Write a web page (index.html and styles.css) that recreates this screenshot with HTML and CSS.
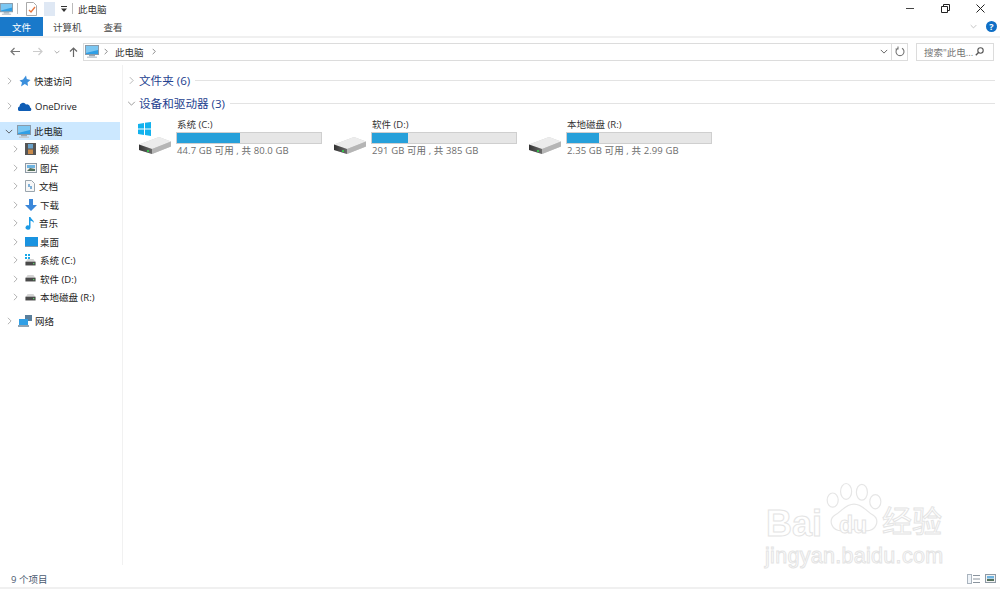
FILE: index.html
```html
<!DOCTYPE html>
<html lang="zh-CN">
<head>
    <meta charset="UTF-8">
    <title>此电脑</title>
    <link rel="stylesheet" href="styles.css">
</head>
<body>
    <svg class="defs" width="0" height="0">
        <defs>
            <linearGradient id="drive-front" x1="0" y1="0" x2="1" y2="0">
                <stop offset="0" stop-color="#333"/>
                <stop offset="1" stop-color="#6a6a6a"/>
            </linearGradient>
            <symbol id="pc" viewBox="0 0 14 13">
                <rect x="0.5" y="0.5" width="13" height="9" fill="#2f9fe6" stroke="#8a9aa8"/>
                <path d="M1 1h12v4L1 8z" fill="#7cc7f2"/>
                <rect x="4" y="10" width="6" height="1.5" fill="#9aa7b2"/>
                <rect x="2" y="11.5" width="10" height="1.5" fill="#c3ccd3"/>
            </symbol>
            <symbol id="drive" viewBox="0 0 34 20">
                <path d="M1 9.500L21 2l12 4.500v5L14 19 1 15z" fill="#cfcfcf"/>
                <path d="M1 9.500l13 4.500 19-7.500L21 2z" fill="#ececec"/>
                <path d="M1 9.500l13 4.500v5L1 15z" fill="url(#drive-front)"/>
                <path d="M14 14l19-7.500v5L14 19z" fill="#b5b5b5"/>
                <rect x="9" y="15" width="2" height="2" fill="#37c04a"/>
            </symbol>
            <symbol id="small-drive" viewBox="0 0 13 8">
                <path d="M1 3l2-3h7l2 3z" fill="#d4d4d4"/>
                <rect x="0.5" y="3" width="12" height="4.500" fill="#4a4a4a"/>
                <rect x="9.500" y="4.500" width="1.500" height="1.500" fill="#5fd06a"/>
            </symbol>
            <symbol id="closed" viewBox="0 0 6 10">
                <path d="M1 1l4 4-4 4" fill="none" stroke="currentColor" stroke-width="1"/>
            </symbol>
            <symbol id="open" viewBox="0 0 10 6">
                <path d="M1 1l4 4 4-4" fill="none" stroke="currentColor" stroke-width="1"/>
            </symbol>
        </defs>
    </svg>

    <div class="window">
        <div class="title-bar">
            <svg class="qa-pc" width="13" height="12"><use href="#pc"/></svg>
            <span class="qa-sep"></span>
            <svg class="qa-doc" width="11" height="14" viewBox="0 0 11 14">
                <path d="M.5.500h7l3 3v10H.500z" fill="#fff" stroke="#a9a9a9"/>
                <path d="M3 8l2 2 4-5" fill="none" stroke="#e8743b" stroke-width="1.300"/>
            </svg>
            <svg class="qa-blank" width="11" height="14" viewBox="0 0 11 14">
                <rect width="11" height="14" fill="#dfe8f4"/>
            </svg>
            <svg class="qa-arrow" width="6" height="7" viewBox="0 0 6 7">
                <path d="M0 1h6v1H0zM0 3.500h6L3 7z" fill="#333"/>
            </svg>
            <span class="qa-sep qa-sep-last"></span>
            <span class="title-text">此电脑</span>
            <div class="window-buttons">
                <svg width="9" height="9" viewBox="0 0 9 9"><path d="M0 4.500h8" stroke="#444"/></svg>
                <svg width="9" height="9" viewBox="0 0 9 9"><path d="M.5 2.500h6v6h-6zM2.500 2.500v-2h6v6h-2" fill="none" stroke="#222"/></svg>
                <svg width="9" height="9" viewBox="0 0 9 9"><path d="M.5.500l8 8M8.500.500l-8 8" stroke="#222"/></svg>
            </div>
        </div>

        <div class="ribbon">
            <span class="tab tab-file">文件</span>
            <span class="tab tab-computer">计算机</span>
            <span class="tab tab-view">查看</span>
            <svg class="ribbon-chevron" width="7" height="5"><use href="#open"/></svg>
            <span class="help">?</span>
        </div>

        <div class="nav-bar">
            <svg class="nav-back" width="10" height="9" viewBox="0 0 10 9"><path d="M10 4.500H1M4.500 1L1 4.500 4.500 8" fill="none" stroke="#777" stroke-width="1.200"/></svg>
            <svg class="nav-forward" width="10" height="9" viewBox="0 0 10 9"><path d="M0 4.500h9M5.500 1L9 4.500 5.500 8" fill="none" stroke="#ccc" stroke-width="1.200"/></svg>
            <svg class="nav-recent" width="6" height="4"><use href="#open"/></svg>
            <svg class="nav-up" width="9" height="10" viewBox="0 0 9 10"><path d="M4.500 10V1M1 4.500L4.500 1 8 4.500" fill="none" stroke="#666" stroke-width="1.200"/></svg>
            <div class="address">
                <svg class="address-pc" width="14" height="13"><use href="#pc"/></svg>
                <svg class="crumb-arrow" width="4" height="7"><use href="#closed"/></svg>
                <span class="crumb">此电脑</span>
                <svg class="crumb-arrow" width="4" height="7"><use href="#closed"/></svg>
                <svg class="address-drop" width="8" height="5"><use href="#open"/></svg>
                <span class="refresh">
                    <svg width="10" height="11" viewBox="0 0 10 11"><path d="M3 2.200a4 4 0 1 0 4 0M3 .500v2.500H.500" fill="none" stroke="#777" stroke-width="1.100"/></svg>
                </span>
            </div>
            <div class="search">
                <span>搜索"此电...</span>
                <svg width="9" height="9" viewBox="0 0 9 9"><circle cx="5.500" cy="3.500" r="2.700" fill="none" stroke="#555" stroke-width="1.100"/><path d="M3.500 5.500L.8 8.200" stroke="#555" stroke-width="1.300"/></svg>
            </div>
        </div>

        <div class="main">
            <nav class="sidebar">
                <div class="tree-row top-row">
                    <svg class="tree-arrow" width="5" height="8"><use href="#closed"/></svg>
                    <svg class="tree-icon" width="13" height="12" viewBox="0 0 13 12"><path d="M8 .5l.8 3.500L12.500 5 9.500 7.500 10 11 6.800 9 3 11.500 4 7.500 1.500 5.500 5 4.500z" fill="#3b8fdc"/></svg>
                    <span>快速访问</span>
                </div>
                <div class="tree-row top-row">
                    <svg class="tree-arrow" width="5" height="8"><use href="#closed"/></svg>
                    <svg class="tree-icon" width="14" height="9" viewBox="0 0 14 9"><path d="M1 9a2.500 2.500 0 0 1 .5-4.500A3.500 3.500 0 0 1 8 2.500a3 3 0 0 1 4 3A2 2 0 0 1 12.500 9z" fill="#0f5db5"/></svg>
                    <span>OneDrive</span>
                </div>
                <div class="tree-row top-row selected">
                    <svg class="tree-arrow tree-arrow-open" width="8" height="5"><use href="#open"/></svg>
                    <svg class="tree-icon" width="14" height="13"><use href="#pc"/></svg>
                    <span>此电脑</span>
                </div>
                <div class="tree-row child-row">
                    <svg class="tree-arrow" width="5" height="8"><use href="#closed"/></svg>
                    <svg class="child-icon" width="11" height="12" viewBox="0 0 11 12"><rect width="11" height="12" fill="#555"/><rect x="3" y="1" width="5" height="4.500" fill="#6aa2c9"/><rect x="3" y="6.500" width="5" height="4.500" fill="#c98a4b"/></svg>
                    <span>视频</span>
                </div>
                <div class="tree-row child-row">
                    <svg class="tree-arrow" width="5" height="8"><use href="#closed"/></svg>
                    <svg class="child-icon" width="12" height="10" viewBox="0 0 12 10"><rect x=".5" y=".5" width="11" height="9" fill="#f2f2f2" stroke="#8e9aa5"/><rect x="2" y="2" width="8" height="3" fill="#6eb3e0"/><path d="M2 8l3-3 5 1v2z" fill="#54705a"/></svg>
                    <span>图片</span>
                </div>
                <div class="tree-row child-row">
                    <svg class="tree-arrow" width="5" height="8"><use href="#closed"/></svg>
                    <svg class="child-icon" width="10" height="12" viewBox="0 0 10 12"><path d="M.5.500h6l3 3v8H.500z" fill="#f7f7f7" stroke="#9aa5ad"/><path d="M3 4h2v3H3zM5 6h2v3H5z" fill="#7fb0d8"/></svg>
                    <span>文档</span>
                </div>
                <div class="tree-row child-row">
                    <svg class="tree-arrow" width="5" height="8"><use href="#closed"/></svg>
                    <svg class="child-icon" width="12" height="12" viewBox="0 0 12 12"><path d="M4 0h4v6h4l-6 6-6-6h4z" fill="#3b87d9"/></svg>
                    <span>下载</span>
                </div>
                <div class="tree-row child-row">
                    <svg class="tree-arrow" width="5" height="8"><use href="#closed"/></svg>
                    <svg class="child-icon" width="10" height="13" viewBox="0 0 10 13"><path d="M4 0h1.500c.3 2 3.500 3 3.500 6-1-1.500-2-2-3.500-2.300V10.500A2.500 2.200 0 1 1 4 8.500z" fill="#1c9be6"/></svg>
                    <span>音乐</span>
                </div>
                <div class="tree-row child-row">
                    <svg class="tree-arrow" width="5" height="8"><use href="#closed"/></svg>
                    <svg class="child-icon desktop-icon" width="13" height="10" viewBox="0 0 13 10"><rect width="13" height="9" fill="#1a93e0"/><rect y="9" width="13" height="1" fill="#8a9aa8"/></svg>
                    <span>桌面</span>
                </div>
                <div class="tree-row child-row">
                    <svg class="tree-arrow" width="5" height="8"><use href="#closed"/></svg>
                    <span class="child-icon small-system">
                        <svg class="small-win" width="5" height="5" viewBox="0 0 5 5"><path d="M0 0h2v2H0zM3 0h2v2H3zM0 3h2v2H0zM3 3h2v2H3z" fill="#19a8e8"/></svg>
                        <svg width="11" height="7"><use href="#small-drive"/></svg>
                    </span>
                    <span>系统 (C:)</span>
                </div>
                <div class="tree-row child-row">
                    <svg class="tree-arrow" width="5" height="8"><use href="#closed"/></svg>
                    <svg class="child-icon" width="11" height="7"><use href="#small-drive"/></svg>
                    <span>软件 (D:)</span>
                </div>
                <div class="tree-row child-row">
                    <svg class="tree-arrow" width="5" height="8"><use href="#closed"/></svg>
                    <svg class="child-icon" width="11" height="7"><use href="#small-drive"/></svg>
                    <span>本地磁盘 (R:)</span>
                </div>
                <div class="tree-row top-row network-row">
                    <svg class="tree-arrow" width="5" height="8"><use href="#closed"/></svg>
                    <svg class="tree-icon" width="14" height="12" viewBox="0 0 14 12"><rect x="7" y="0" width="7" height="6" fill="#5a7f9c"/><rect x="1" y="4" width="9" height="6" fill="#2f9fe6"/><rect x="0" y="10" width="11" height="2" fill="#8fa3b3"/></svg>
                    <span>网络</span>
                </div>
            </nav>

            <section class="content">
                <div class="group-head">
                    <svg class="group-arrow" width="5" height="9"><use href="#closed"/></svg>
                    <span>文件夹 (6)</span>
                    <i class="group-line"></i>
                </div>
                <div class="group-head group-open">
                    <svg class="group-arrow-open" width="9" height="5"><use href="#open"/></svg>
                    <span>设备和驱动器 (3)</span>
                    <i class="group-line"></i>
                </div>
                <div class="drives">
                    <div class="drive">
                        <div class="drive-icon">
                            <svg class="win-logo" width="13" height="14" viewBox="0 0 13 14"><path d="M0 2l6-1v5.500H0zM7 .8L13 0v6.500H7zM0 7.500h6V13l-6-1zM7 7.500h6V14l-6-1z" fill="#12b2ee"/></svg>
                            <svg width="34" height="20"><use href="#drive"/></svg>
                        </div>
                        <div class="drive-info">
                            <div class="drive-name">系统 (C:)</div>
                            <div class="drive-bar"><div class="drive-used" style="width: 43.500%"></div></div>
                            <div class="drive-free">44.7 GB 可用 , 共 80.0 GB</div>
                        </div>
                    </div>
                    <div class="drive">
                        <div class="drive-icon">
                            <svg width="34" height="20"><use href="#drive"/></svg>
                        </div>
                        <div class="drive-info">
                            <div class="drive-name">软件 (D:)</div>
                            <div class="drive-bar"><div class="drive-used" style="width: 25%"></div></div>
                            <div class="drive-free">291 GB 可用 , 共 385 GB</div>
                        </div>
                    </div>
                    <div class="drive">
                        <div class="drive-icon">
                            <svg width="34" height="20"><use href="#drive"/></svg>
                        </div>
                        <div class="drive-info">
                            <div class="drive-name">本地磁盘 (R:)</div>
                            <div class="drive-bar"><div class="drive-used" style="width: 22%"></div></div>
                            <div class="drive-free">2.35 GB 可用 , 共 2.99 GB</div>
                        </div>
                    </div>
                </div>
            </section>
        </div>

        <div class="status-bar">
            <span>9 个项目</span>
            <div class="view-buttons">
                <svg width="13" height="10" viewBox="0 0 13 10"><rect x=".5" y=".5" width="4" height="9" fill="#eef3f8" stroke="#aab4be"/><path d="M6 1.500h7M6 5h7M6 8.500h7" stroke="#8a949e"/></svg>
                <svg width="11" height="9" viewBox="0 0 11 9"><rect x=".5" y=".5" width="10" height="8" fill="#f2f2f2" stroke="#8e9aa5"/><rect x="2" y="2" width="7" height="2.500" fill="#6eb3e0"/><rect x="2" y="5" width="7" height="2" fill="#54705a"/></svg>
            </div>
        </div>

        <div class="watermark">
            <svg class="paw" width="60" height="54" viewBox="0 0 76 62">
                <g fill="#fff" stroke="#e6e6e6" stroke-width="1.500">
                    <ellipse cx="11" cy="21" rx="7" ry="9"/>
                    <ellipse cx="28" cy="10" rx="7" ry="10"/>
                    <ellipse cx="48" cy="11" rx="7" ry="10"/>
                    <ellipse cx="65" cy="23" rx="7" ry="9"/>
                    <path d="M38 26c11 0 15 9 24 14 9 6 5 20-9 20-5 0-10-2-15-2s-10 2-15 2c-14 0-18-14-9-20 9-5 13-14 24-14z"/>
                </g>
            </svg>
            <span class="wm-bai">Bai</span>
            <span class="wm-du">du</span>
            <span class="wm-cn">经验</span>
            <span class="wm-url">jingyan.baidu.com</span>
        </div>
    </div>
</body>
</html>
```

FILE: styles.css
```css
* {
    box-sizing: border-box;
}
body {
    margin: 0;
    background-color: #fff;
    font-family: "Open Sans", "Noto Sans CJK SC", sans-serif;
    font-size: 9.5px;
    color: #333;
}
.defs {
    position: absolute;
}
svg {
    display: block;
    flex: none;
}
.window {
    position: relative;
    display: flex;
    flex-direction: column;
    width: 1000px;
    height: 589px;
    overflow: hidden;
}

/* title */
.title-bar {
    display: flex;
    align-items: center;
    height: 17px;
    flex: none;
}
.qa-sep {
    width: 1px;
    height: 11px;
    margin-left: 4px;
    background-color: #bbb;
}
.qa-doc {
    margin-left: 8px;
}
.qa-blank {
    margin-left: 7px;
}
.qa-arrow {
    margin-left: 6px;
}
.qa-sep-last {
    margin-left: 5px;
}
.title-text {
    margin-left: 5px;
}
.window-buttons {
    display: flex;
    gap: 26px;
    margin-left: auto;
    margin-right: 15px;
}

/* ribbon */
.ribbon {
    display: flex;
    align-items: center;
    height: 21px;
    flex: none;
    border-bottom: 2px solid #f0f0f0;
    color: #444;
}
.tab-file {
    display: flex;
    align-items: center;
    justify-content: center;
    width: 43px;
    height: 19px;
    background-color: #1979ca;
    color: #fff;
}
.tab-computer {
    margin-left: 10px;
}
.tab-view {
    margin-left: 22px;
}
.ribbon-chevron {
    margin-left: auto;
    color: #aaa;
}
.help {
    display: flex;
    align-items: center;
    justify-content: center;
    width: 11px;
    height: 11px;
    margin-left: 9px;
    margin-right: 3px;
    border-radius: 50%;
    background-color: #0f6fc6;
    color: #fff;
    font-size: 9px;
    font-weight: 700;
}

/* address */
.nav-bar {
    display: flex;
    align-items: center;
    height: 27px;
    flex: none;
    padding-left: 10px;
}
.nav-forward {
    margin-left: 13px;
}
.nav-recent {
    margin-left: 11px;
    color: #777;
}
.nav-up {
    margin-left: 9px;
}
.address {
    display: flex;
    align-items: center;
    width: 825px;
    height: 18px;
    margin-left: 5px;
    padding-left: 1px;
    border: 1px solid #dcdcdc;
}
.crumb-arrow {
    margin-left: 5px;
    color: #555;
}
.crumb {
    margin-left: 7px;
}
.crumb + .crumb-arrow {
    margin-left: 8px;
}
.address-drop {
    margin-left: auto;
    margin-right: 3px;
    color: #444;
}
.refresh {
    display: flex;
    align-items: center;
    justify-content: center;
    width: 16px;
    height: 100%;
    border-left: 1px solid #dcdcdc;
}
.search {
    display: flex;
    align-items: center;
    justify-content: space-between;
    width: 78px;
    height: 18px;
    margin-left: 8px;
    padding: 0 9px 0 7px;
    border: 1px solid #dcdcdc;
    color: #777;
}

/* tree */
.main {
    display: flex;
    flex: 1;
    min-height: 0;
}
.sidebar {
    width: 123px;
    flex: none;
    padding-top: 7px;
    border-right: 1px solid #f1f1f1;
}
.tree-row {
    display: flex;
    align-items: center;
    width: 120px;
    height: 18.500px;
    color: #222;
}
.top-row {
    margin-bottom: 6.500px;
}
.top-row .tree-arrow {
    margin-left: 7px;
    color: #a0a0a0;
}
.top-row .tree-icon {
    margin-left: 6px;
    margin-right: 3px;
}
.top-row.selected {
    height: 18px;
    margin-bottom: 0;
    background-color: #cce8ff;
}
.top-row .tree-arrow-open {
    margin-left: 5px;
    color: #444;
}
.top-row.selected .tree-icon {
    margin-left: 4px;
    margin-right: 3px;
}
.child-row .tree-arrow {
    margin-left: 13px;
    color: #a0a0a0;
}
.child-row .child-icon {
    margin-left: 7px;
    margin-right: 3px;
}
.child-row:has(+ .network-row) {
    margin-bottom: 5.500px;
}
.child-row svg.child-icon[width="10"],
.child-row svg.child-icon[width="11"] {
    margin-right: 4px;
}
.child-row .desktop-icon {
    margin-right: 2px;
}
.child-row .small-system {
    display: block;
    width: 11px;
    height: 12px;
    margin-right: 4px;
}
.network-row {
    margin-bottom: 0;
}

/* content */
.content {
    flex: 1;
    min-width: 0;
    padding-top: 6px;
}
.group-head {
    display: flex;
    align-items: center;
    height: 18px;
    margin-bottom: 5px;
    padding-left: 6px;
    font-size: 11.600px;
    color: #24418f;
}
.group-arrow {
    color: #aaa;
    margin-right: 5px;
}
.group-open {
    padding-left: 4px;
    margin-bottom: 6px;
}
.group-arrow-open {
    color: #888;
    margin-right: 3px;
}
.group-line {
    flex: 1;
    height: 1px;
    margin-left: 5px;
    margin-right: 5px;
    background-color: #e3e3e3;
}
.drives {
    display: flex;
    padding-left: 15px;
}
.drive {
    display: flex;
    width: 195px;
}
.drive-icon {
    display: flex;
    flex-direction: column;
    justify-content: flex-end;
    width: 39px;
    height: 37px;
    position: relative;
    flex: none;
}
.win-logo {
    position: absolute;
    left: 0;
    top: 4px;
}
.drive-name {
    height: 14px;
    line-height: 14px;
    color: #333;
}
.drive-bar {
    width: 146px;
    height: 12px;
    margin-left: -1px;
    border: 1px solid #cfcfcf;
    background-color: #e6e6e6;
}
.drive-used {
    height: 100%;
    background-color: #26a0da;
}
.drive-free {
    line-height: 14px;
    letter-spacing: 0.100px;
    color: #6d6d6d;
}

/* status */
.status-bar {
    display: flex;
    align-items: center;
    justify-content: space-between;
    height: 24px;
    flex: none;
    padding: 6px 4px 0 11px;
    border-bottom: 2px solid #f0f0f0;
    color: #4a5a70;
}
.view-buttons {
    display: flex;
    gap: 5px;
}

/* watermark over the content */
.watermark {
    position: absolute;
    left: 760px;
    top: 480px;
    width: 200px;
    height: 90px;
    color: #fff;
    -webkit-text-stroke: 1px #e4e4e4;
    font-family: "Liberation Sans", "Noto Sans CJK SC", sans-serif;
    line-height: 1;
}
.paw {
    position: absolute;
    left: 64px;
    top: 1px;
}
.wm-bai {
    position: absolute;
    left: 6px;
    top: 26px;
    font-size: 36px;
    font-weight: 700;
}
.wm-du {
    position: absolute;
    left: 79px;
    top: 34px;
    font-size: 23px;
    font-weight: 700;
}
.wm-cn {
    position: absolute;
    left: 122px;
    top: 27px;
    font-size: 30px;
}
.wm-url {
    position: absolute;
    left: 5px;
    top: 66px;
    font-size: 21.500px;
    letter-spacing: 0.300px;
}
```
